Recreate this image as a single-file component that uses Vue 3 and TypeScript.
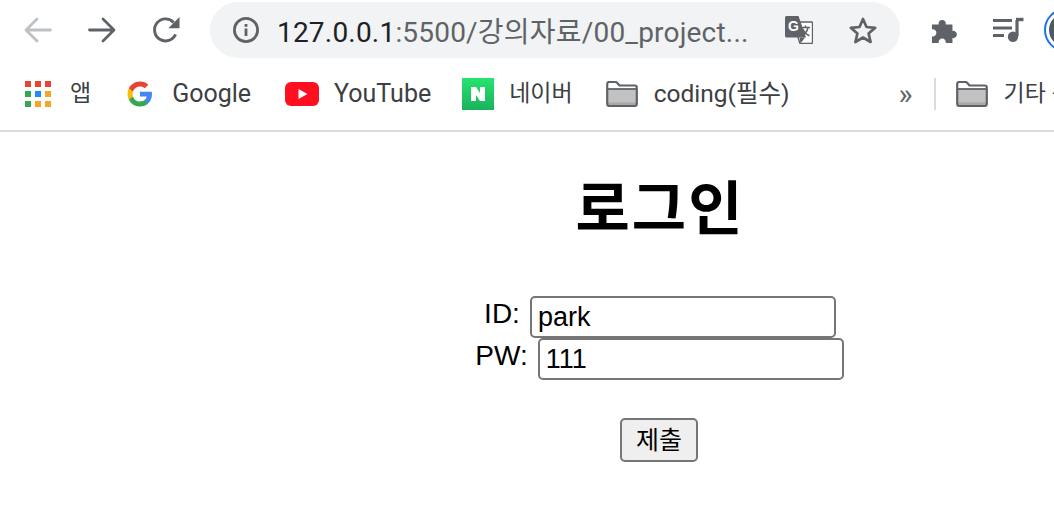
<template>
  <div class="browser">
    <header class="chrome">
      <div class="toolbar">
        <button class="nav-btn back" aria-label="back">
          <svg width="28" height="26" viewBox="0 0 28 26"><path d="M26.500 13H2.500M13 2 2 13 13 24" fill="none" stroke="currentColor" stroke-width="2.800" stroke-linecap="round" stroke-linejoin="round"/></svg>
        </button>
        <button class="nav-btn forward" aria-label="forward">
          <svg width="28" height="26" viewBox="0 0 28 26"><path d="M1.500 13h24M15 2 26 13 15 24" fill="none" stroke="currentColor" stroke-width="2.800" stroke-linecap="round" stroke-linejoin="round"/></svg>
        </button>
        <button class="nav-btn reload" aria-label="reload">
          <svg width="28" height="28" viewBox="0 0 28 28"><path d="M23.600 18.400A11 11 0 1 1 21.600 6.400" fill="none" stroke="currentColor" stroke-width="2.900"/><path d="M27.500 1v11.200H16.300z" fill="currentColor"/></svg>
        </button>
        <div class="omnibox">
          <svg class="info" width="26" height="26" viewBox="0 0 26 26"><circle cx="13" cy="13" r="11.600" fill="none" stroke="currentColor" stroke-width="2.800"/><rect x="11.600" y="11.500" width="2.800" height="7.500" fill="currentColor"/><rect x="11.600" y="7" width="2.800" height="2.800" fill="currentColor"/></svg>
          <span class="url"><span class="host">127.0.0.1</span>:5500/강의자료/00_project...</span>
          <svg class="translate" width="28" height="28" viewBox="0 0 28 28">
            <path d="M13 6h13.500a1 1 0 0 1 1 1v19.500a1 1 0 0 1-1 1H15l-2-6z" fill="#fff" stroke="#5f6368" stroke-width="1.400"/>
            <path d="M1.500 0h12L21 21.500H1.500a1.500 1.500 0 0 1-1.500-1.500V1.500A1.500 1.500 0 0 1 1.500 0z" fill="#5f6368"/>
            <path d="M14.500 21.500 15.500 27.500 20 21.500z" fill="#5f6368"/>
            <text x="3" y="15" class="g">G</text>
            <path d="M16 11.500h9M20.500 9.500v2M23 11.500c-.8 4-3.500 7-6.500 8.600M18 13c1 3 3.500 5.500 6.500 6.800" fill="none" stroke="#5f6368" stroke-width="1.500"/>
          </svg>
          <svg class="star" width="30" height="28" viewBox="0 0 30 28"><path d="M15 3 18.500 11 27.200 11.800 20.600 17.500 22.600 26 15 21.500 7.400 26 9.400 17.500 2.800 11.800 11.500 11z" fill="none" stroke="currentColor" stroke-width="2.700" stroke-linejoin="round"/></svg>
        </div>
        <svg class="puzzle" width="28" height="28" viewBox="0 0 30 30"><path d="M1 9h7.200a3.900 3.900 0 1 1 7.600 0H23v7a3.900 3.900 0 1 1 0 7.600V29H15.800a3.900 3.900 0 1 0-7.600 0H1v-7.200a3.900 3.900 0 1 0 0-7.600z" fill="#5f6368"/></svg>
        <svg class="media" width="32" height="26" viewBox="0 0 32 26"><path d="M1 3.500h19M1 11h19M1 18.500h11" fill="none" stroke="#5f6368" stroke-width="3"/><path d="M25 3v16" stroke="#5f6368" stroke-width="3.200" fill="none"/><path d="M24 2.500h7.500" stroke="#5f6368" stroke-width="3.400"/><circle cx="21" cy="19.800" r="5.200" fill="#5f6368"/></svg>
        <div class="avatar"><div class="avatar-inner"></div></div>
      </div>
      <nav class="bookmarks">
        <div class="bm apps">
          <div class="apps-grid">
            <i v-for="(c, i) in appColors" :key="i" class="dot" :style="{ background: c }"></i>
          </div>
          <span class="ko">앱</span>
        </div>
        <div class="bm google">
          <svg width="26" height="26" viewBox="0 0 48 48">
            <path fill="#4285F4" d="M46.100 24.500c0-1.600-.1-3.100-.4-4.500H24v8.500h12.400c-.5 2.900-2.100 5.300-4.600 7v5.800h7.400c4.400-4 6.900-10 6.900-16.800z"/>
            <path fill="#34A853" d="M24 47c6.200 0 11.400-2 15.200-5.500l-7.400-5.800c-2.100 1.400-4.700 2.200-7.800 2.200-6 0-11.100-4-12.900-9.500H3.500v6C7.300 41.900 15 47 24 47z"/>
            <path fill="#FBBC05" d="M11.100 28.400c-.5-1.400-.7-2.900-.7-4.400s.3-3 .7-4.400v-6H3.500C2 16.700 1 20.200 1 24s.9 7.300 2.500 10.400z"/>
            <path fill="#EA4335" d="M24 10.100c3.400 0 6.400 1.200 8.800 3.400l6.600-6.600C35.400 3.200 30.200 1 24 1 15 1 7.300 6.100 3.500 13.600l7.600 6C12.900 14.100 18 10.100 24 10.100z"/>
          </svg>
          <span>Google</span>
        </div>
        <div class="bm youtube">
          <svg width="34" height="24" viewBox="0 0 34 24"><rect width="34" height="24" rx="6" fill="#ff0f1f"/><path d="M13.500 7v10l9-5z" fill="#fff"/></svg>
          <span>YouTube</span>
        </div>
        <div class="bm naver">
          <div class="naver-icon"><svg width="16" height="16" viewBox="0 0 16 16"><path d="M1 1h5l4 6V1h5v14h-5L6 9v6H1z" fill="#fff"/></svg></div>
          <span class="ko">네이버</span>
        </div>
        <div class="bm folder-a">
          <svg class="folder" width="32" height="26" viewBox="0 0 32 26"><path d="M1.500 8h29v15.500a1 1 0 0 1-1 1h-27a1 1 0 0 1-1-1z" fill="#c2c2c2"/><path d="M1.500 21.500h29v2.500h-29z" fill="#a8a8a8"/><path d="M1.200 3a2 2 0 0 1 2-2h6.300a2 2 0 0 1 1.600.8L13.500 4.500h15.300a2 2 0 0 1 2 2V23a2 2 0 0 1-2 2H3.200a2 2 0 0 1-2-2z" fill="none" stroke="#5f6368" stroke-width="2.200" stroke-linejoin="round"/><path d="M2 8h28" stroke="#5f6368" stroke-width="1.800"/></svg>
          <span class="coding">coding(필수)</span>
        </div>
        <span class="more">»</span>
        <div class="sep"></div>
        <div class="bm folder-b">
          <svg class="folder" width="32" height="26" viewBox="0 0 32 26"><path d="M1.500 8h29v15.500a1 1 0 0 1-1 1h-27a1 1 0 0 1-1-1z" fill="#c2c2c2"/><path d="M1.500 21.500h29v2.500h-29z" fill="#a8a8a8"/><path d="M1.200 3a2 2 0 0 1 2-2h6.300a2 2 0 0 1 1.600.8L13.500 4.500h15.300a2 2 0 0 1 2 2V23a2 2 0 0 1-2 2H3.200a2 2 0 0 1-2-2z" fill="none" stroke="#5f6368" stroke-width="2.200" stroke-linejoin="round"/><path d="M2 8h28" stroke="#5f6368" stroke-width="1.800"/></svg>
          <span class="ko">기타 북마크</span>
        </div>
      </nav>
    </header>
    <main class="page">
      <h1>로그인</h1>
      <form class="login" @submit.prevent>
        <div class="row first">
          <label for="uid">ID:</label>
          <input id="uid" v-model="userId" type="text" />
        </div>
        <div class="row">
          <label for="pw">PW:</label>
          <input id="pw" v-model="userPw" type="text" />
        </div>
        <button type="submit" class="submit">제출</button>
      </form>
    </main>
  </div>
</template>

<script setup lang="ts">
import { ref } from 'vue'

const userId = ref('park')
const userPw = ref('111')

const R = '#ea4335'
const G = '#34a853'
const B = '#1a8cff'
const Y = '#f5a623'
const appColors: string[] = [R, R, R, G, B, Y, G, Y, Y]
</script>

<style scoped>
.browser {
  width: 1054px;
  height: 525px;
  overflow: hidden;
  background: #fff;
  color: #000;
  font-family: "Liberation Sans", "Noto Sans CJK KR", sans-serif;
}

.chrome {
  height: 132px;
  box-sizing: border-box;
  border-bottom: 2px solid #dadce0;
  overflow: hidden;
  font-family: Roboto, "Noto Sans CJK KR", sans-serif;
}

.toolbar {
  display: flex;
  align-items: center;
  height: 56px;
  padding-top: 2px;
  white-space: nowrap;
}

.nav-btn {
  display: flex;
  padding: 0;
  border: 0;
  background: none;
  color: #5f6368;
}

.back {
  margin-left: 24px;
  color: #bdc1c6;
}

.forward {
  margin-left: 36px;
}

.reload {
  margin-left: 36px;
}

.omnibox {
  display: flex;
  align-items: center;
  flex: none;
  width: 690px;
  height: 56px;
  margin-left: 30px;
  border-radius: 28px;
  background: #f1f3f4;
  color: #5f6368;
}

.info {
  margin-left: 23px;
}

.url {
  width: 490px;
  margin-left: 18px;
  font-size: 28px;
  letter-spacing: 0.2px;
}

.host {
  color: #202124;
}

.translate {
  flex: none;
  margin-left: 18px;
}

.g {
  font: bold 14px "Liberation Sans", sans-serif;
  fill: #fff;
}

.star {
  flex: none;
  margin-left: 35px;
}

.puzzle {
  flex: none;
  margin-left: 31px;
}

.media {
  flex: none;
  margin-left: 33px;
}

.avatar {
  flex: none;
  box-sizing: border-box;
  width: 44px;
  height: 44px;
  margin-left: 20px;
  padding: 3px;
  border: 2px solid #1a73e8;
  border-radius: 50%;
}

.avatar-inner {
  width: 100%;
  height: 100%;
  border-radius: 50%;
  background: #4a5a66;
}

.bookmarks {
  display: flex;
  align-items: center;
  height: 38px;
  margin-top: 17px;
  color: #3c4043;
  font-size: 25px;
  line-height: 30px;
  white-space: nowrap;
}

.ko {
  font-size: 23px;
}

.bm {
  display: flex;
  flex: none;
  align-items: center;
}

.apps {
  gap: 19px;
  margin-left: 25px;
}

.apps-grid {
  display: grid;
  grid-template-columns: repeat(3, 6px);
  gap: 4px;
}

.dot {
  width: 6px;
  height: 6px;
}

.google {
  gap: 19px;
  margin-left: 36px;
}

.youtube {
  gap: 15px;
  margin-left: 34px;
}

.naver {
  gap: 15px;
  margin-left: 31px;
}

.naver-icon {
  display: flex;
  align-items: center;
  justify-content: center;
  width: 32px;
  height: 32px;
  background: linear-gradient(#25e46f, #19b35c);
}

.folder-a {
  gap: 16px;
  margin-left: 33px;
}

.coding {
  font-size: 24.500px;
}

.more {
  flex: none;
  margin-left: 109px;
  color: #5f6368;
  font-size: 30px;
  line-height: 30px;
}

.sep {
  flex: none;
  width: 2px;
  height: 32px;
  margin-left: 21px;
  background: #dadce0;
}

.folder-b {
  gap: 16px;
  margin-left: 20px;
}

.page {
  padding-left: 264px;
  text-align: center;
}

h1 {
  margin: 0;
  padding: 38px 0 0 2px;
  font-family: "Liberation Sans", "Noto Sans CJK KR", sans-serif;
  font-size: 59px;
  font-weight: 700;
  letter-spacing: 2px;
  line-height: 80px;
}

.login {
  margin-top: 46px;
}

.row {
  display: flex;
  justify-content: center;
  align-items: flex-start;
  gap: 10px;
  height: 42px;
  padding-left: 1px;
}

.row.first {
  padding-left: 2px;
}

.row label {
  font-size: 28px;
  line-height: 36px;
}

.row input {
  box-sizing: border-box;
  width: 306px;
  height: 42px;
  padding: 0 6px;
  border: 2px solid #767676;
  border-radius: 5px;
  background: #fff;
  color: #000;
  font: 27px "Liberation Sans", sans-serif;
  outline: none;
}

.submit {
  display: block;
  box-sizing: border-box;
  width: 78px;
  height: 44px;
  margin: 38px auto 0;
  padding: 0 0 6px;
  border: 2px solid #767676;
  border-radius: 5px;
  background: #efefef;
  color: #000;
  font: 25px "Liberation Sans", "Noto Sans CJK KR", sans-serif;
}
</style>

<style>
html,
body {
  margin: 0;
  overflow: hidden;
}
</style>
